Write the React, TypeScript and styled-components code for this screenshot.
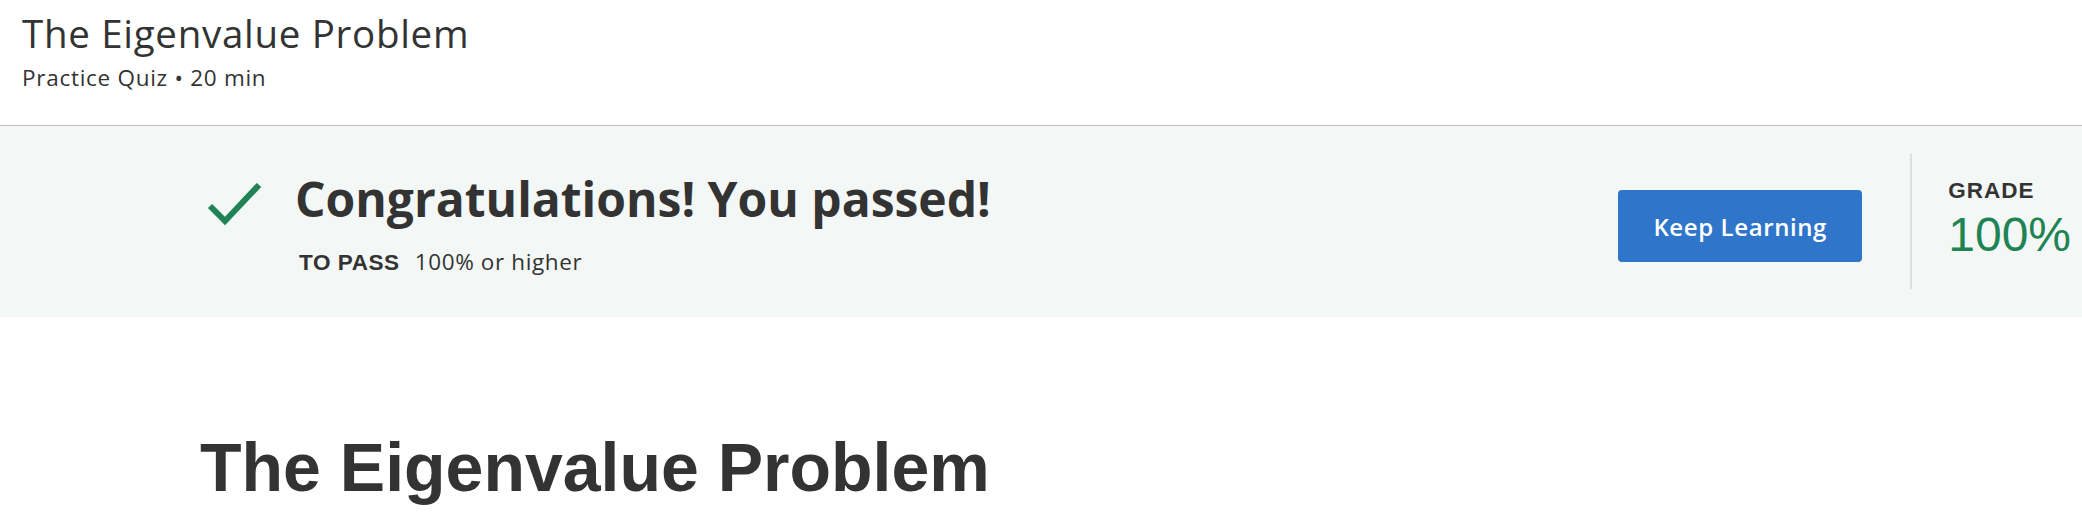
import React from "react";
import styled, { createGlobalStyle } from "styled-components";

const GlobalStyle = createGlobalStyle`
  html, body {
    margin: 0;
    padding: 0;
    background: #ffffff;
  }
  body {
    font-family: "Open Sans", "Noto Sans", sans-serif;
    color: #333333;
    overflow: hidden;
  }
`;

const Page = styled.div`
  width: 2082px;
  height: 518px;
  overflow: hidden;
  display: flex;
  flex-direction: column;
`;

const Header = styled.header`
  padding: 9px 22px 33px 22px;
  border-bottom: 1px solid #bdbdbd;
`;

const ItemTitle = styled.h2`
  margin: 0;
  font-family: "Open Sans", sans-serif;
  font-weight: 400;
  font-size: 38.5px;
  line-height: 48px;
  letter-spacing: 0.7px;
  color: #333333;
`;

const ItemMeta = styled.div`
  margin-top: 7px;
  font-family: "Open Sans", sans-serif;
  font-size: 22.5px;
  line-height: 28px;
  letter-spacing: 0.72px;
  color: #333333;
`;

const Banner = styled.section`
  display: flex;
  align-items: center;
  height: 191px;
  box-sizing: border-box;
  padding: 0 11px 0 207px;
  background: #f3f8f6;
`;

const ResultGroup = styled.div`
  flex: 1;
  display: flex;
  align-items: flex-start;
`;

const CheckIcon = styled.svg`
  width: 56px;
  height: 46px;
  margin-top: 16px;
  margin-right: 32px;
  flex-shrink: 0;
`;

const ResultText = styled.div`
  margin-top: 4px;
  display: flex;
  flex-direction: column;
`;

const ResultHeading = styled.h3`
  margin: 0;
  font-family: "Open Sans", sans-serif;
  font-weight: 700;
  font-size: 48px;
  line-height: 56px;
  color: #333333;
`;

const PassLine = styled.div`
  margin-top: 21px;
  padding-left: 4px;
  display: flex;
  align-items: baseline;
  line-height: 28px;
`;

const PassLabel = styled.span`
  font-family: "Liberation Sans", Arial, sans-serif;
  font-weight: 700;
  font-size: 22.5px;
  letter-spacing: 0.57px;
  color: #333333;
  margin-right: 15px;
`;

const PassValue = styled.span`
  font-family: "Open Sans", sans-serif;
  font-size: 22.5px;
  letter-spacing: 0.62px;
  color: #333333;
`;

const PrimaryButton = styled.button`
  width: 244px;
  height: 72px;
  margin-top: 9px;
  border: none;
  border-radius: 4px;
  background: #2f75c9;
  color: #ffffff;
  font-family: "Open Sans", sans-serif;
  font-weight: 600;
  font-size: 24px;
  letter-spacing: 0.6px;
  cursor: pointer;
  flex-shrink: 0;
`;

const GradeBlock = styled.div`
  margin-left: 48px;
  border-left: 2px solid #dedede;
  padding: 25px 0 28px 36px;
  display: flex;
  flex-direction: column;
  gap: 6px;
`;

const GradeLabel = styled.div`
  font-family: "Liberation Sans", Arial, sans-serif;
  font-weight: 700;
  font-size: 22.5px;
  line-height: 24px;
  letter-spacing: 1px;
  color: #333333;
`;

const GradeValue = styled.div`
  font-family: "Liberation Sans", Arial, sans-serif;
  font-weight: 400;
  font-size: 48px;
  line-height: 52px;
  color: #1f8354;
`;

const Content = styled.main`
  padding: 110px 0 0 200px;
`;

const ContentTitle = styled.h1`
  margin: 0;
  font-family: "Liberation Sans", Arial, sans-serif;
  font-weight: 700;
  font-size: 68px;
  line-height: 81.6px;
  color: #333333;
  white-space: nowrap;
`;

export default function App() {
  return (
    <>
      <GlobalStyle />
      <Page>
        <Header>
          <ItemTitle>The Eigenvalue Problem</ItemTitle>
          <ItemMeta>Practice Quiz • 20 min</ItemMeta>
        </Header>
        <Banner>
          <ResultGroup>
            <CheckIcon viewBox="0 0 56 46" aria-hidden="true">
              <polyline
                points="3,23 18,38 52,2"
                fill="none"
                stroke="#1f8354"
                strokeWidth="6"
              />
            </CheckIcon>
            <ResultText>
              <ResultHeading>Congratulations! You passed!</ResultHeading>
              <PassLine>
                <PassLabel>TO PASS</PassLabel>
                <PassValue>100% or higher</PassValue>
              </PassLine>
            </ResultText>
          </ResultGroup>
          <PrimaryButton>Keep Learning</PrimaryButton>
          <GradeBlock>
            <GradeLabel>GRADE</GradeLabel>
            <GradeValue>100%</GradeValue>
          </GradeBlock>
        </Banner>
        <Content>
          <ContentTitle>The Eigenvalue Problem</ContentTitle>
        </Content>
      </Page>
    </>
  );
}
